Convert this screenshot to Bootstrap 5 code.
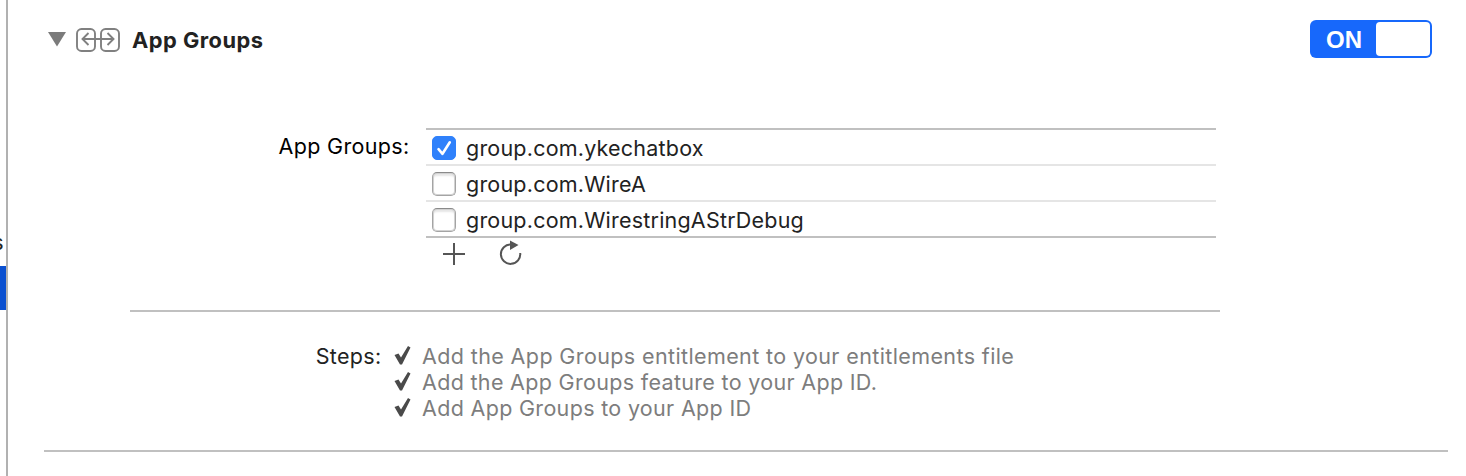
<!DOCTYPE html>
<html lang="en">
<head>
<meta charset="utf-8">
<meta name="viewport" content="width=device-width, initial-scale=1">
<title>App Groups</title>
<link href="https://cdn.jsdelivr.net/npm/bootstrap@5.3.0/dist/css/bootstrap.min.css" rel="stylesheet">
<style>
body { font-family: Inter, "Liberation Sans", sans-serif; font-size: 21.500px; line-height: 26px; font-weight: 430; letter-spacing: .32px; color: #222; background: #fff; height: 476px; }
.side { width: 8px; border-right: 2px solid #b1b1b1; }
.side-text { height: 266px; padding: 229px 2px 0 0; font-size: 21.500px; }
.side-active { height: 44px; background: #0b50d0; }
.pane-head { height: 38px; margin: 20px 34px 0 40px; }
.pane-title { font-size: 21.800px; line-height: 38px; font-weight: 700; letter-spacing: .5px; margin: 1px 0 0 12px; }
.toggle { width: 122px; height: 38px; padding: 2px; border-radius: 6px; background: #1768fb; color: #fff; font: 700 24px/36px "Liberation Sans", sans-serif; letter-spacing: 0; }
.toggle-on { padding-left: 14px; }
.toggle-knob { width: 54px; height: 34px; border-radius: 4px; background: #fff; }
.groups { margin-top: 70px; }
.groups-label { width: 401.500px; padding-top: 5px; letter-spacing: .33px; color: #000; }
.groups-body { width: 790px; margin-left: 16.500px; }
.group-list { border-top: 2px solid #c0c0c0; border-bottom: 2px solid #c0c0c0; letter-spacing: .21px; }
.group-row { height: 36px; padding-left: 6px; border-bottom: 2px solid #e5e5e5; }
.group-row:last-child { height: 34px; border-bottom: 0; }
.group-row .form-check-input { width: 24px; height: 24px; margin: 6px 10px 0 0; border: 1px solid #a4a4a4; border-top-color: #8a8a8a; border-radius: 5px; box-shadow: inset 0 0 0 1px #d2d2d2, inset 0 3px 2px #e6e6e6; float: none; }
.group-row .form-check-input:checked { background: #2f81fb; border-color: #2f81fb; box-shadow: none; }
.check-cell { position: relative; display: flex; }
.check-cell svg { position: absolute; left: 0; top: 6px; pointer-events: none; }
.group-name { padding-top: 5px; }
.group-tools { height: 34px; padding-left: 16px; gap: 33px; }
.rule { height: 2px; background: #c0c0c0; }
.rule-inner { width: 1090px; margin: 38px 0 0 122px; }
.rule-outer { margin: 29px 18px 0 36px; }
.steps { margin-top: 31px; }
.steps-label { width: 373.500px; }
.steps-list { margin: 0 0 0 12.500px; color: #7d7d7d; }
.steps-list li:first-child { letter-spacing: .385px; }
.steps-list svg { margin-right: 10px; }
</style>
</head>
<body class="d-flex overflow-hidden">
<aside class="side flex-shrink-0 overflow-hidden">
  <div class="side-text d-flex justify-content-end">s</div>
  <div class="side-active"></div>
</aside>
<main class="flex-grow-1">
  <header class="pane-head d-flex justify-content-between">
    <div class="d-flex">
      <svg width="72" height="38" viewBox="48 20 72 38" fill="none" stroke="#808080" stroke-width="1.900">
        <path d="M48 32h18l-9 14.500z" fill="#7b7b7b" stroke="none"/>
        <rect x="77" y="29" width="18" height="22" rx="4.500"/>
        <rect x="101" y="29" width="18" height="22" rx="4.500"/>
        <path d="M82.500 39h31M88.500 33l-6 6 6 6M107.500 33l6 6-6 6"/>
      </svg>
      <h1 class="pane-title">App Groups</h1>
    </div>
    <div class="toggle d-flex justify-content-between" role="switch" aria-checked="true">
      <span class="toggle-on">ON</span><span class="toggle-knob"></span>
    </div>
  </header>

  <section class="groups d-flex">
    <div class="groups-label text-end">App Groups:</div>
    <div class="groups-body">
      <div class="group-list">
        <label class="group-row d-flex">
          <span class="check-cell"><input class="form-check-input" type="checkbox" checked>
            <svg width="24" height="24" viewBox="0 0 24 24" fill="none" stroke="#fff" stroke-width="2.600" stroke-linecap="round" stroke-linejoin="round"><path d="M6.500 13.200l4 4.600 7.300-11.500"/></svg></span>
          <span class="group-name">group.com.ykechatbox</span>
        </label>
        <label class="group-row d-flex">
          <span class="check-cell"><input class="form-check-input" type="checkbox"></span>
          <span class="group-name">group.com.WireA</span>
        </label>
        <label class="group-row d-flex">
          <span class="check-cell"><input class="form-check-input" type="checkbox"></span>
          <span class="group-name">group.com.WirestringAStrDebug</span>
        </label>
      </div>
      <div class="group-tools d-flex">
        <svg width="24" height="32" viewBox="442 238 24 32" fill="none" stroke="#555" stroke-width="2"><path d="M443 254h22M454 243v22"/></svg>
        <svg width="24" height="32" viewBox="499 238 24 32" fill="none" stroke="#555" stroke-width="2"><path d="M511 244.500A9.700 9.700 0 1 0 520.200 253"/><path d="M510 240.500v9.500l8.500-5z" fill="#555" stroke="none"/></svg>
      </div>
    </div>
  </section>

  <div class="rule rule-inner"></div>

  <section class="steps d-flex">
    <div class="steps-label text-end">Steps:</div>
    <ul class="steps-list list-unstyled">
      <li class="d-flex"><svg width="18" height="26" viewBox="0 0 18 26"><path d="M.5 12l4-1.500 2.500 4L14 3l2.500 1.500L8 21.500H6z" fill="#4a4a4a"/></svg><span>Add the App Groups entitlement to your entitlements file</span></li>
      <li class="d-flex"><svg width="18" height="26" viewBox="0 0 18 26"><path d="M.5 12l4-1.500 2.500 4L14 3l2.500 1.500L8 21.500H6z" fill="#4a4a4a"/></svg><span>Add the App Groups feature to your App ID.</span></li>
      <li class="d-flex"><svg width="18" height="26" viewBox="0 0 18 26"><path d="M.5 12l4-1.500 2.500 4L14 3l2.500 1.500L8 21.500H6z" fill="#4a4a4a"/></svg><span>Add App Groups to your App ID</span></li>
    </ul>
  </section>

  <div class="rule rule-outer"></div>
</main>
</body>
</html>
